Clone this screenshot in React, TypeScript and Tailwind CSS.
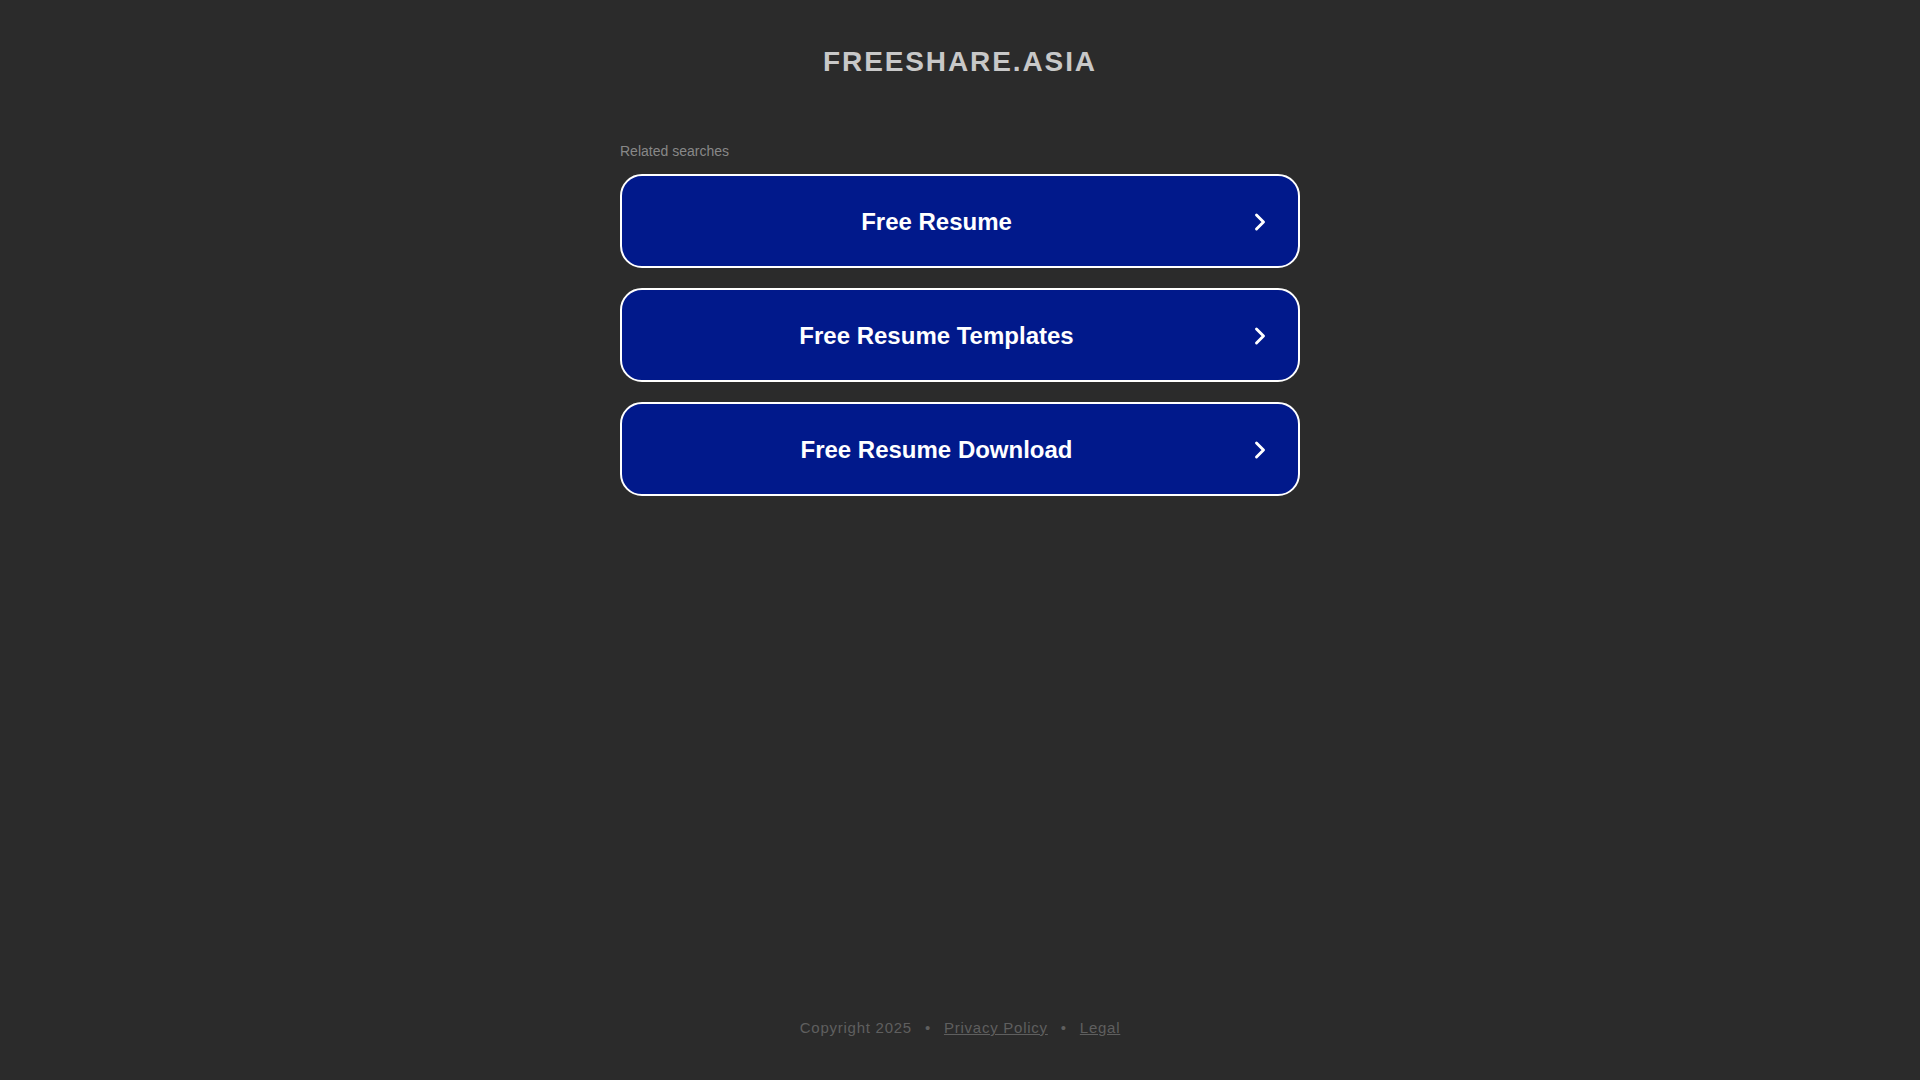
import { ChevronRight } from 'lucide-react';

const searches = ['Free Resume', 'Free Resume Templates', 'Free Resume Download'];

export default function App() {
    return (
        <div className="flex h-screen flex-col items-center bg-[#2b2b2b] font-['Liberation_Sans',Arial,sans-serif]">
            <h1 className="pt-[46px] text-[28px] leading-[32px] font-bold tracking-[1.9px] text-[#c8c8c8]">FREESHARE.ASIA</h1>

            <div className="mt-[65px] w-[680px]">
                <p className="text-[14px] leading-[16px] text-[#888888]">Related searches</p>

                <div className="mt-[15px] flex flex-col gap-[20px]">
                    {searches.map((label) => (
                        <a
                            key={label}
                            href="#"
                            className="flex h-[94px] items-center gap-[19px] rounded-[22px] border-2 border-white bg-[#01198b] pt-[1px] pr-[24px] pl-[24px] text-white"
                        >
                            <span className="flex-1 text-center text-[24px] font-bold">{label}</span>
                            <ChevronRight size={28} strokeWidth={2.5} />
                        </a>
                    ))}
                </div>
            </div>

            <footer className="mt-auto flex items-center gap-[13px] pb-[42px] text-[15px] leading-[20px] tracking-[0.75px] text-[#5f5f5f]">
                <span>Copyright 2025</span>
                <span>•</span>
                <a href="#" className="underline">
                    Privacy Policy
                </a>
                <span>•</span>
                <a href="#" className="underline">
                    Legal
                </a>
            </footer>
        </div>
    );
}
